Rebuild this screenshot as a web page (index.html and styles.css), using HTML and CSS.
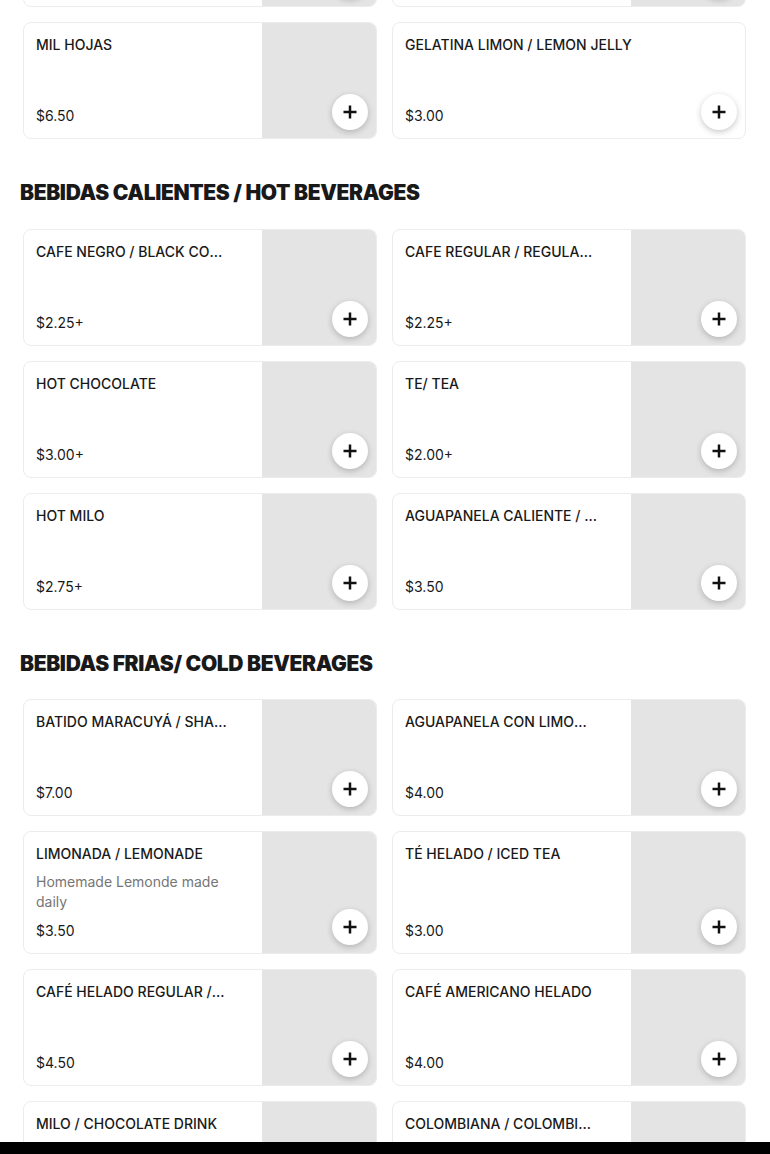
FILE: index.html
```html
<!DOCTYPE html>
<html lang="es">
<head>
<meta charset="utf-8">
<title>Menu</title>
<link rel="stylesheet" href="styles.css">
</head>
<body>
<main class="menu">
  <div class="grid grid-first">
    <div class="card"><div class="info"><div class="title">TRES LECHES</div><div class="price">$6.00</div></div><div class="thumb"></div><button class="add" aria-label="Agregar"><svg viewBox="0 0 16 16" width="16" height="16"><path d="M8 1.5v13M1.5 8h13" stroke="#111" stroke-width="2.5" fill="none"/></svg></button></div>
    <div class="card"><div class="info"><div class="title">FLAN</div><div class="price">$4.00</div></div><div class="thumb"></div><button class="add" aria-label="Agregar"><svg viewBox="0 0 16 16" width="16" height="16"><path d="M8 1.5v13M1.5 8h13" stroke="#111" stroke-width="2.5" fill="none"/></svg></button></div>
    <div class="card"><div class="info"><div class="title">MIL HOJAS</div><div class="price">$6.50</div></div><div class="thumb"></div><button class="add" aria-label="Agregar"><svg viewBox="0 0 16 16" width="16" height="16"><path d="M8 1.5v13M1.5 8h13" stroke="#111" stroke-width="2.5" fill="none"/></svg></button></div>
    <div class="card"><div class="info"><div class="title">GELATINA LIMON / LEMON JELLY</div><div class="price">$3.00</div></div><button class="add" aria-label="Agregar"><svg viewBox="0 0 16 16" width="16" height="16"><path d="M8 1.5v13M1.5 8h13" stroke="#111" stroke-width="2.5" fill="none"/></svg></button></div>
  </div>

  <section class="section">
    <h2 class="section-title">BEBIDAS CALIENTES / HOT BEVERAGES</h2>
    <div class="grid">
      <div class="card"><div class="info"><div class="title">CAFE NEGRO / BLACK COFFEE</div><div class="price">$2.25+</div></div><div class="thumb"></div><button class="add" aria-label="Agregar"><svg viewBox="0 0 16 16" width="16" height="16"><path d="M8 1.5v13M1.5 8h13" stroke="#111" stroke-width="2.5" fill="none"/></svg></button></div>
      <div class="card"><div class="info"><div class="title">CAFE REGULAR / REGULAR COFFEE</div><div class="price">$2.25+</div></div><div class="thumb"></div><button class="add" aria-label="Agregar"><svg viewBox="0 0 16 16" width="16" height="16"><path d="M8 1.5v13M1.5 8h13" stroke="#111" stroke-width="2.5" fill="none"/></svg></button></div>
      <div class="card"><div class="info"><div class="title">HOT CHOCOLATE</div><div class="price">$3.00+</div></div><div class="thumb"></div><button class="add" aria-label="Agregar"><svg viewBox="0 0 16 16" width="16" height="16"><path d="M8 1.5v13M1.5 8h13" stroke="#111" stroke-width="2.5" fill="none"/></svg></button></div>
      <div class="card"><div class="info"><div class="title">TE/ TEA</div><div class="price">$2.00+</div></div><div class="thumb"></div><button class="add" aria-label="Agregar"><svg viewBox="0 0 16 16" width="16" height="16"><path d="M8 1.5v13M1.5 8h13" stroke="#111" stroke-width="2.5" fill="none"/></svg></button></div>
      <div class="card"><div class="info"><div class="title">HOT MILO</div><div class="price">$2.75+</div></div><div class="thumb"></div><button class="add" aria-label="Agregar"><svg viewBox="0 0 16 16" width="16" height="16"><path d="M8 1.5v13M1.5 8h13" stroke="#111" stroke-width="2.5" fill="none"/></svg></button></div>
      <div class="card"><div class="info"><div class="title">AGUAPANELA CALIENTE / HOT PANELA</div><div class="price">$3.50</div></div><div class="thumb"></div><button class="add" aria-label="Agregar"><svg viewBox="0 0 16 16" width="16" height="16"><path d="M8 1.5v13M1.5 8h13" stroke="#111" stroke-width="2.5" fill="none"/></svg></button></div>
    </div>
  </section>

  <section class="section">
    <h2 class="section-title">BEBIDAS FRIAS/ COLD BEVERAGES</h2>
    <div class="grid">
      <div class="card"><div class="info"><div class="title">BATIDO MARACUYÁ / SHAKE PASSION FRUIT</div><div class="price">$7.00</div></div><div class="thumb"></div><button class="add" aria-label="Agregar"><svg viewBox="0 0 16 16" width="16" height="16"><path d="M8 1.5v13M1.5 8h13" stroke="#111" stroke-width="2.5" fill="none"/></svg></button></div>
      <div class="card"><div class="info"><div class="title">AGUAPANELA CON LIMON / PANELA LEMONADE</div><div class="price">$4.00</div></div><div class="thumb"></div><button class="add" aria-label="Agregar"><svg viewBox="0 0 16 16" width="16" height="16"><path d="M8 1.5v13M1.5 8h13" stroke="#111" stroke-width="2.5" fill="none"/></svg></button></div>
      <div class="card"><div class="info"><div class="title">LIMONADA / LEMONADE</div><div class="desc">Homemade Lemonde made daily</div><div class="price">$3.50</div></div><div class="thumb"></div><button class="add" aria-label="Agregar"><svg viewBox="0 0 16 16" width="16" height="16"><path d="M8 1.5v13M1.5 8h13" stroke="#111" stroke-width="2.5" fill="none"/></svg></button></div>
      <div class="card"><div class="info"><div class="title">TÉ HELADO / ICED TEA</div><div class="price">$3.00</div></div><div class="thumb"></div><button class="add" aria-label="Agregar"><svg viewBox="0 0 16 16" width="16" height="16"><path d="M8 1.5v13M1.5 8h13" stroke="#111" stroke-width="2.5" fill="none"/></svg></button></div>
      <div class="card"><div class="info"><div class="title">CAFÉ HELADO REGULAR / ICED COFFEE</div><div class="price">$4.50</div></div><div class="thumb"></div><button class="add" aria-label="Agregar"><svg viewBox="0 0 16 16" width="16" height="16"><path d="M8 1.5v13M1.5 8h13" stroke="#111" stroke-width="2.5" fill="none"/></svg></button></div>
      <div class="card"><div class="info"><div class="title">CAFÉ AMERICANO HELADO</div><div class="price">$4.00</div></div><div class="thumb"></div><button class="add" aria-label="Agregar"><svg viewBox="0 0 16 16" width="16" height="16"><path d="M8 1.5v13M1.5 8h13" stroke="#111" stroke-width="2.5" fill="none"/></svg></button></div>
      <div class="card"><div class="info"><div class="title">MILO / CHOCOLATE DRINK</div><div class="price">$3.50</div></div><div class="thumb"></div><button class="add" aria-label="Agregar"><svg viewBox="0 0 16 16" width="16" height="16"><path d="M8 1.5v13M1.5 8h13" stroke="#111" stroke-width="2.5" fill="none"/></svg></button></div>
      <div class="card"><div class="info"><div class="title">COLOMBIANA / COLOMBIAN SODA</div><div class="price">$2.50</div></div><div class="thumb"></div><button class="add" aria-label="Agregar"><svg viewBox="0 0 16 16" width="16" height="16"><path d="M8 1.5v13M1.5 8h13" stroke="#111" stroke-width="2.5" fill="none"/></svg></button></div>
    </div>
  </section>
</main>
<div class="bottom-bar"></div>
</body>
</html>
```

FILE: styles.css
```css
* { box-sizing: border-box; }

html, body {
  margin: 0;
  padding: 0;
  background: #fff;
  overflow: hidden;
}

body {
  font-family: Inter, "Liberation Sans", Arial, sans-serif;
  color: #191919;
}

.menu {
  padding: 0 24px 0 23px;
}

.grid {
  display: grid;
  grid-template-columns: 1fr 1fr;
  column-gap: 15px;
  row-gap: 15px;
}

.grid-first {
  margin-top: -110px;
}

.section-title {
  margin: 40px 0 21.5px -3px;
  font-family: Inter, "Liberation Sans", sans-serif;
  font-weight: 900;
  font-size: 21px;
  line-height: 28px;
  letter-spacing: -0.35px;
  color: #191919;
}

.card {
  position: relative;
  display: flex;
  min-height: 117px;
  background: #fff;
  border: 1px solid #ececec;
  border-radius: 8px;
  overflow: hidden;
}

.info {
  flex: 1;
  min-width: 0;
  display: flex;
  flex-direction: column;
  padding: 12px 34px 12px 12px;
}

.title {
  font-size: 14px;
  line-height: 20px;
  font-weight: 500;
  white-space: nowrap;
  overflow: hidden;
  text-overflow: ellipsis;
  color: #191919;
}

.desc {
  margin-top: 8px;
  font-size: 14px;
  line-height: 20px;
  color: #767676;
}

.price {
  margin-top: auto;
  padding-top: 9px;
  font-size: 14px;
  line-height: 20px;
  color: #191919;
}

.thumb {
  flex: 0 0 114px;
  background: #e4e4e4;
}

.add {
  position: absolute;
  right: 8px;
  bottom: 8px;
  width: 36px;
  height: 36px;
  border: none;
  border-radius: 50%;
  background: #fff;
  box-shadow: 0 2px 6px rgba(0, 0, 0, 0.22);
  padding: 0;
  display: flex;
  align-items: center;
  justify-content: center;
}

.add svg { display: block; }

.bottom-bar {
  position: fixed;
  left: 0;
  right: 0;
  bottom: 0;
  height: 12px;
  background: #000;
}
```
